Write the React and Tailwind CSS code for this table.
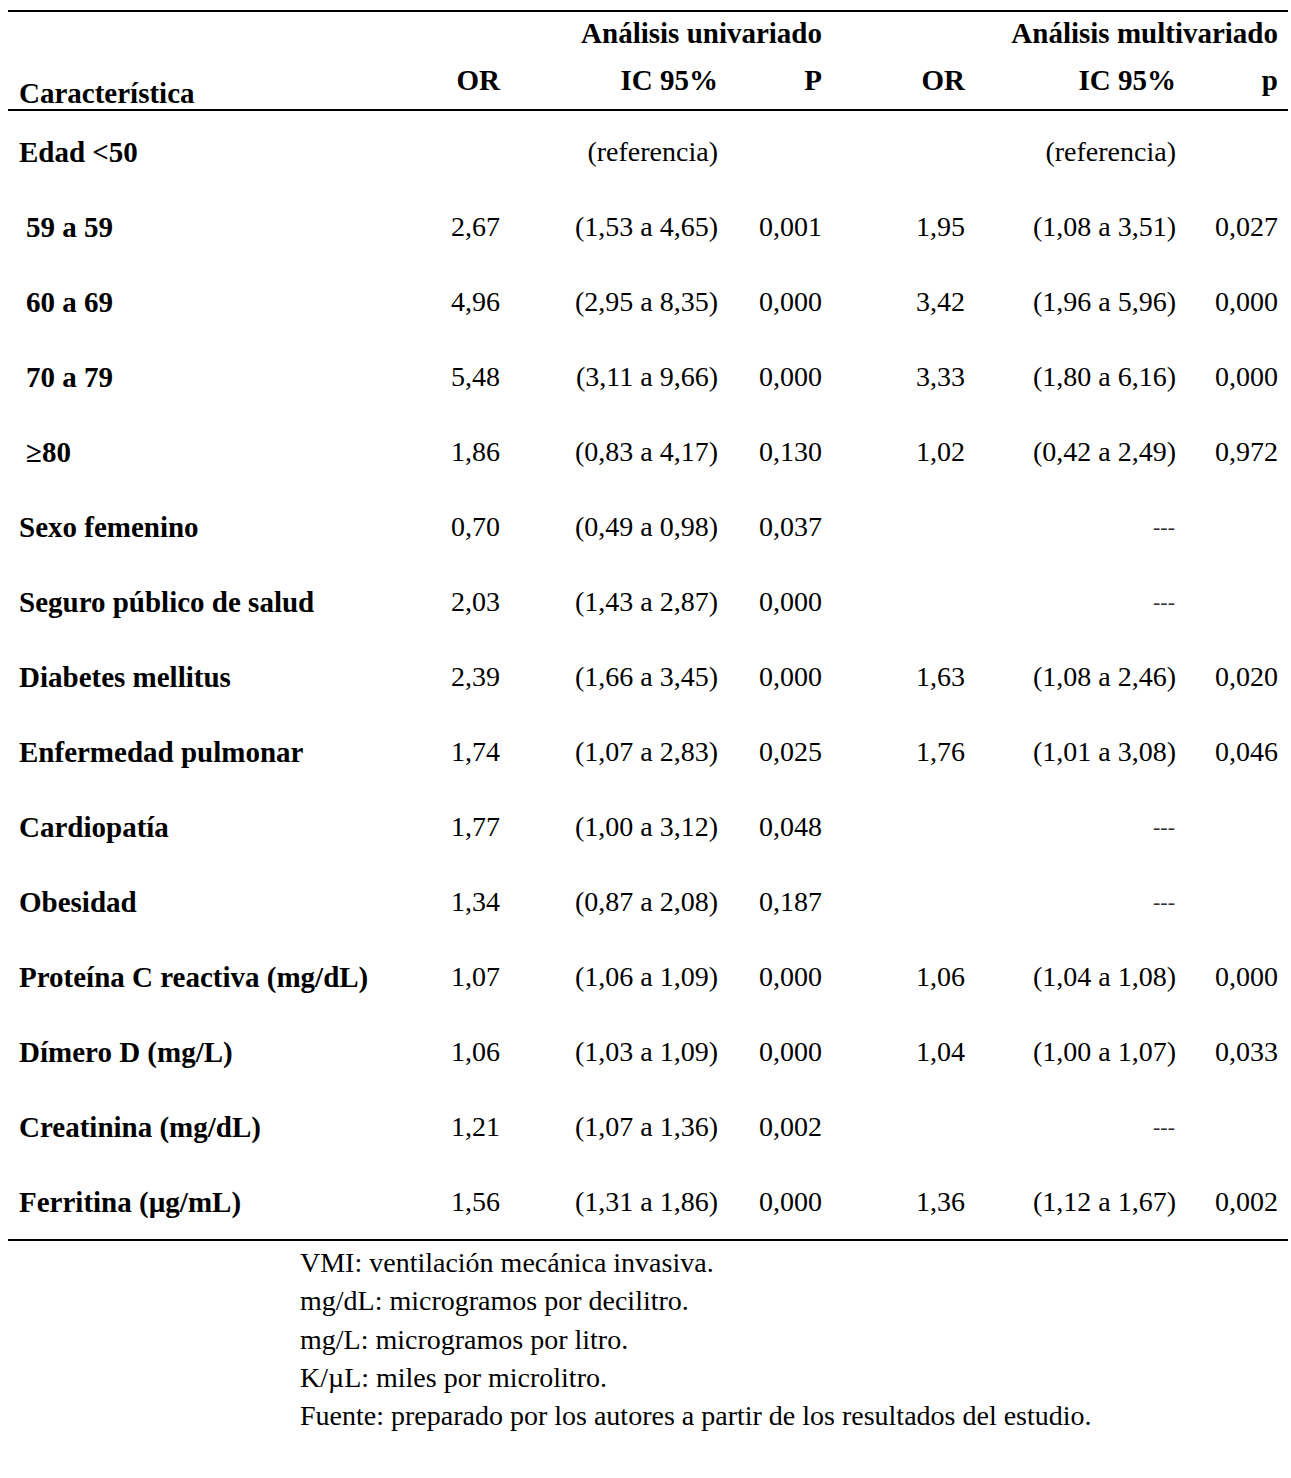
import React from "react";

const rows = [
  { label: "Edad <50", ref: true },
  { label: "59 a 59", indent: true, u: ["2,67", "(1,53 a 4,65)", "0,001"], m: ["1,95", "(1,08 a 3,51)", "0,027"] },
  { label: "60 a 69", indent: true, u: ["4,96", "(2,95 a 8,35)", "0,000"], m: ["3,42", "(1,96 a 5,96)", "0,000"] },
  { label: "70 a 79", indent: true, u: ["5,48", "(3,11 a 9,66)", "0,000"], m: ["3,33", "(1,80 a 6,16)", "0,000"] },
  { label: "≥80", indent: true, u: ["1,86", "(0,83 a 4,17)", "0,130"], m: ["1,02", "(0,42 a 2,49)", "0,972"] },
  { label: "Sexo femenino", u: ["0,70", "(0,49 a 0,98)", "0,037"], m: null },
  { label: "Seguro público de salud", u: ["2,03", "(1,43 a 2,87)", "0,000"], m: null },
  { label: "Diabetes mellitus", u: ["2,39", "(1,66 a 3,45)", "0,000"], m: ["1,63", "(1,08 a 2,46)", "0,020"] },
  { label: "Enfermedad pulmonar", u: ["1,74", "(1,07 a 2,83)", "0,025"], m: ["1,76", "(1,01 a 3,08)", "0,046"] },
  { label: "Cardiopatía", u: ["1,77", "(1,00 a 3,12)", "0,048"], m: null },
  { label: "Obesidad", u: ["1,34", "(0,87 a 2,08)", "0,187"], m: null },
  { label: "Proteína C reactiva (mg/dL)", u: ["1,07", "(1,06 a 1,09)", "0,000"], m: ["1,06", "(1,04 a 1,08)", "0,000"] },
  { label: "Dímero D (mg/L)", u: ["1,06", "(1,03 a 1,09)", "0,000"], m: ["1,04", "(1,00 a 1,07)", "0,033"] },
  { label: "Creatinina (mg/dL)", u: ["1,21", "(1,07 a 1,36)", "0,002"], m: null },
  { label: "Ferritina (µg/mL)", u: ["1,56", "(1,31 a 1,86)", "0,000"], m: ["1,36", "(1,12 a 1,67)", "0,002"] },
];

const cols = "grid grid-cols-[381px_100px_218px_104px_143px_211px_102px]";

function Cell({ children, className = "" }) {
  return <div className={"text-right whitespace-nowrap " + className}>{children}</div>;
}

export default function App() {
  return (
    <div
      className="bg-white text-black min-h-[1478px] pt-[10px]"
      style={{ fontFamily: '"Liberation Serif", "DejaVu Serif", serif' }}
    >
      <div className="ml-[8px] w-[1280px] border-t-2 border-black">
        {/* header */}
        <div className="border-b-2 border-black pl-[11px] pr-[10px] text-[29px] font-bold">
          <div className={cols + " h-[42px] items-center leading-[38px]"}>
            <div />
            <Cell className="col-span-3">Análisis univariado</Cell>
            <Cell className="col-span-3">Análisis multivariado</Cell>
          </div>
          <div className={cols + " h-[55px]"}>
            <div className="self-end text-left leading-[30px] pb-[1px]">Característica</div>
            <Cell className="pt-[7px] leading-[38px]">OR</Cell>
            <Cell className="pt-[7px] leading-[38px]">IC 95%</Cell>
            <Cell className="pt-[7px] leading-[38px]">P</Cell>
            <Cell className="pt-[7px] leading-[38px]">OR</Cell>
            <Cell className="pt-[7px] leading-[38px]">IC 95%</Cell>
            <Cell className="pt-[7px] leading-[38px]">p</Cell>
          </div>
        </div>
        {/* body */}
        <div className="border-b-2 border-black pl-[11px] pr-[10px] pt-[3px] text-[28px] leading-[38px]">
          {rows.map((r, i) => (
            <div key={i} className={cols + " h-[75px] items-center"}>
              <div className={"font-bold text-[29px] text-left whitespace-nowrap " + (r.indent ? "pl-[7px]" : "")}>
                {r.label}
              </div>
              {r.ref ? (
                <>
                  <div />
                  <Cell>(referencia)</Cell>
                  <div />
                  <div />
                  <Cell>(referencia)</Cell>
                  <div />
                </>
              ) : (
                <>
                  <Cell>{r.u[0]}</Cell>
                  <Cell>{r.u[1]}</Cell>
                  <Cell>{r.u[2]}</Cell>
                  {r.m ? (
                    <>
                      <Cell>{r.m[0]}</Cell>
                      <Cell>{r.m[1]}</Cell>
                      <Cell>{r.m[2]}</Cell>
                    </>
                  ) : (
                    <>
                      <div />
                      <Cell className="text-[22px] text-[#333] pr-[1px]">---</Cell>
                      <div />
                    </>
                  )}
                </>
              )}
            </div>
          ))}
        </div>
      </div>
      {/* footnotes */}
      <div className="pl-[300px] pt-[3px] text-[28px] leading-[38.3px]">
        <p>VMI: ventilación mecánica invasiva.</p>
        <p>mg/dL: microgramos por decilitro.</p>
        <p>mg/L: microgramos por litro.</p>
        <p>K/µL: miles por microlitro.</p>
        <p>Fuente: preparado por los autores a partir de los resultados del estudio.</p>
      </div>
    </div>
  );
}
